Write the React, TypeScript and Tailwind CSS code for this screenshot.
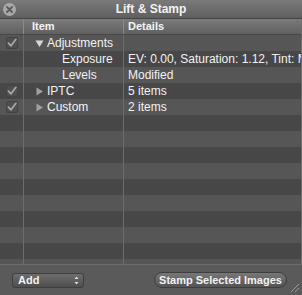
import React from 'react';

type Row = {
  checked?: boolean;
  level: number;
  arrow?: 'open' | 'closed';
  item: string;
  details: string;
};

const rows: Row[] = [
  { checked: true, level: 0, arrow: 'open', item: 'Adjustments', details: '' },
  { level: 1, item: 'Exposure', details: 'EV: 0.00, Saturation: 1.12, Tint: Mod' },
  { level: 1, item: 'Levels', details: 'Modified' },
  { checked: true, level: 0, arrow: 'closed', item: 'IPTC', details: '5 items' },
  { checked: true, level: 0, arrow: 'closed', item: 'Custom', details: '2 items' },
];

const Check = () => (
  <div className="w-[12px] h-[12px] rounded-[2px] bg-[#4f4f4f] border border-[#444] flex items-center justify-center">
    <svg width="10" height="10" viewBox="0 0 10 10">
      <path d="M1.5 5.2 L4 7.8 L8.8 1.5" stroke="#a8a8a8" strokeWidth="1.8" fill="none" strokeLinecap="round" strokeLinejoin="round" />
    </svg>
  </div>
);

const Arrow = ({ open }: { open: boolean }) => (
  <svg width="9" height="9" viewBox="0 0 9 9" className="shrink-0">
    {open ? <path d="M0.5 1.5 H8.5 L4.5 8 Z" fill="#d8d8d8" /> : <path d="M1.5 0.5 V8.5 L8 4.5 Z" fill="#a0a0a0" />}
  </svg>
);

const App: React.FC = () => {
  const empty = Array.from({ length: 10 });
  return (
    <div
      className="w-[302px] h-[295px] flex flex-col bg-[#585858] overflow-hidden select-none"
      style={{ fontFamily: '"Liberation Sans", Arial, sans-serif' }}
    >
      {/* title bar */}
      <div className="h-[19px] shrink-0 relative flex items-center justify-center bg-gradient-to-b from-[#7a7a7a] to-[#5f5f5f] border-b border-[#444]">
        <div className="absolute left-[3px] top-[3px] w-[13px] h-[13px] rounded-full bg-[#a9a9a9] flex items-center justify-center">
          <svg width="7" height="7" viewBox="0 0 7 7">
            <path d="M1 1 L6 6 M6 1 L1 6" stroke="#5a5a5a" strokeWidth="1.8" strokeLinecap="round" />
          </svg>
        </div>
        <span className="text-[12px] font-bold text-[#f2f2f2] leading-none">Lift &amp; Stamp</span>
      </div>

      {/* table */}
      <div className="flex-1 flex flex-col overflow-hidden border-r border-[#6c6c6c]">
        <div className="h-[16px] shrink-0 flex bg-gradient-to-b from-[#7b7b7b] to-[#606060] border-b border-[#4a4a4a] text-[11px] font-bold text-[#f4f4f4] leading-none">
          <div className="w-[24px] shrink-0 border-r border-[#8a8a8a]" />
          <div className="w-[100px] shrink-0 border-r border-[#8a8a8a] flex items-center pl-[8px]">Item</div>
          <div className="flex-1 flex items-center pl-[4px]">Details</div>
        </div>

        {rows.map((r, i) => (
          <div
            key={i}
            className={`h-[16px] shrink-0 flex text-[12px] text-[#f2f2f2] leading-none ${i % 2 === 0 ? 'bg-[#565656]' : 'bg-[#474747]'}`}
          >
            <div className="w-[24px] shrink-0 border-r border-[#6c6c6c] flex items-center justify-center">
              {r.checked && <Check />}
            </div>
            <div className={`w-[100px] shrink-0 border-r border-[#6c6c6c] flex items-center ${r.level ? 'pl-[38px]' : 'pl-[11px]'}`}>
              {r.arrow && <Arrow open={r.arrow === 'open'} />}
              <span className={r.arrow ? 'ml-[3px]' : ''}>{r.item}</span>
            </div>
            <div className="flex-1 min-w-0 flex items-center pl-[4px] whitespace-nowrap overflow-hidden">{r.details}</div>
          </div>
        ))}

        {empty.map((_, j) => (
          <div
            key={`e${j}`}
            className={`h-[16px] shrink-0 flex ${(rows.length + j) % 2 === 0 ? 'bg-[#565656]' : 'bg-[#474747]'}`}
          >
            <div className="w-[24px] shrink-0 border-r border-[#6c6c6c]" />
            <div className="w-[100px] shrink-0 border-r border-[#6c6c6c]" />
            <div className="flex-1" />
          </div>
        ))}
      </div>

      {/* bottom bar */}
      <div className="h-[31px] shrink-0 relative flex items-center justify-between pl-[12px] pr-[15px] bg-[#5a5a5a] border-t border-[#6a6a6a]">
        <div className="w-[72px] h-[15px] rounded-[3px] bg-gradient-to-b from-[#6e6e6e] to-[#4e4e4e] border border-[#3e3e3e] flex items-center justify-between pl-[5px] pr-[4px] text-[11px] font-bold text-[#f2f2f2] leading-none">
          <span>Add</span>
          <svg width="5" height="9" viewBox="0 0 5 9">
            <path d="M2.5 0.5 L4.5 3 H0.5 Z M2.5 8.5 L4.5 6 H0.5 Z" fill="#dcdcdc" />
          </svg>
        </div>
        <div className="w-[133px] h-[16px] rounded-full bg-gradient-to-b from-[#777] to-[#545454] border border-[#3e3e3e] flex items-center justify-center text-[11px] font-bold text-[#f2f2f2] leading-none">
          Stamp Selected Images
        </div>
        <svg width="11" height="11" viewBox="0 0 11 11" className="absolute right-[2px] bottom-[2px]">
          <path d="M10 2 L2 10 M10 6 L6 10" stroke="#9a9a9a" strokeWidth="1" />
        </svg>
      </div>
    </div>
  );
};

export default App;
